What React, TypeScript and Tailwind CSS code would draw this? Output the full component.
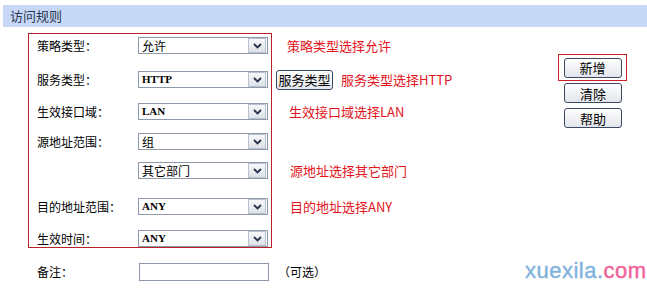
import React from "react";

const cjk = { fontFamily: '"Noto Sans CJK SC", "Noto Sans", sans-serif' };

function Arrow() {
  return (
    <div className="w-[18px] h-[15px] mr-[1px] border border-[#b9c2cd] bg-gradient-to-b from-[#f7f8fa] to-[#dde2e8] flex items-center justify-center">
      <svg width="9" height="6" viewBox="0 0 9 6">
        <path d="M1 1 L4.5 4.5 L8 1" fill="none" stroke="#26324a" strokeWidth="1.8" />
      </svg>
    </div>
  );
}

function Select({ value, latin }: { value: string; latin?: boolean }) {
  return (
    <div className="w-[130px] h-[17px] border border-[#8d99a8] bg-white flex items-center justify-between">
      <span
        className={latin ? "pl-[3px] text-[11px] font-bold text-black leading-none" : "pl-[3px] text-[12px] text-black leading-none"}
        style={latin ? { fontFamily: '"Liberation Serif", serif' } : cjk}
      >
        {value}
      </span>
      <Arrow />
    </div>
  );
}

function Btn({ label, w = 58 }: { label: string; w?: number }) {
  return (
    <div
      className={
        (w === 57 ? "w-[57px]" : "w-[58px]") +
        " h-[20px] rounded-[3px] border border-[#3a4864] bg-gradient-to-b from-[#ffffff] to-[#e2e5ea] flex items-center justify-center text-[13px] text-black leading-none"
      }
      style={cjk}
    >
      {label}
    </div>
  );
}

function Row({ label, mt, children }: { label?: string; mt: string; children: React.ReactNode }) {
  return (
    <div className={"flex items-center h-[17px] " + mt}>
      <div className="w-[109px] pl-[8px] text-[12px] text-black leading-none whitespace-nowrap" style={cjk}>
        {label}
      </div>
      {children}
    </div>
  );
}

function Note({ mt, children }: { mt: string; children: React.ReactNode }) {
  return (
    <div className={"flex items-center h-[17px] " + mt}>
      {children}
    </div>
  );
}

const red = "text-[13px] text-[#e3141b] leading-none whitespace-nowrap";

export default function App() {
  return (
    <div className="relative w-[647px] h-[291px] bg-white overflow-hidden" style={cjk}>
      <div className="mt-[5px] ml-[3px] h-[22px] bg-[#c6d8f6] flex items-center pl-[7px] text-[13px] text-[#2a3650]">
        访问规则
      </div>

      <div className="flex mt-[6px]">
        <div className="ml-[28px] w-[244px] border border-[#b8202a] flex flex-col">
          <Row label="策略类型：" mt="mt-[3px]">
            <Select value="允许" />
          </Row>
          <Row label="服务类型：" mt="mt-[17px]">
            <Select value="HTTP" latin />
          </Row>
          <Row label="生效接口域：" mt="mt-[15px]">
            <Select value="LAN" latin />
          </Row>
          <Row label="源地址范围：" mt="mt-[13px]">
            <Select value="组" />
          </Row>
          <Row mt="mt-[12px]">
            <Select value="其它部门" />
          </Row>
          <Row label="目的地址范围：" mt="mt-[19px]">
            <Select value="ANY" latin />
          </Row>
          <Row label="生效时间：" mt="mt-[15px]">
            <Select value="ANY" latin />
          </Row>
        </div>

        <div className="ml-[4px] w-[282px] flex flex-col pt-[1px]">
          <Note mt="mt-[3px]">
            <span className={"ml-[11px] " + red}>策略类型选择允许</span>
          </Note>
          <Note mt="mt-[17px]">
            <Btn label="服务类型" w={57} />
            <span className={"ml-[8px] " + red}>服务类型选择HTTP</span>
          </Note>
          <Note mt="mt-[15px]">
            <span className={"ml-[13px] " + red}>生效接口域选择LAN</span>
          </Note>
          <Note mt="mt-[13px]">
            <span />
          </Note>
          <Note mt="mt-[12px]">
            <span className={"ml-[14px] " + red}>源地址选择其它部门</span>
          </Note>
          <Note mt="mt-[19px]">
            <span className={"ml-[14px] " + red}>目的地址选择ANY</span>
          </Note>
        </div>

        <div className="flex flex-col mt-[21px]">
          <div className="w-[69px] h-[27px] border border-[#c8202a] flex items-center justify-center">
            <Btn label="新增" />
          </div>
          <div className="ml-[6px] mt-[2px]">
            <Btn label="清除" />
          </div>
          <div className="ml-[6px] mt-[5px]">
            <Btn label="帮助" />
          </div>
        </div>
      </div>

      <div className="flex items-center h-[18px] mt-[15px]">
        <div className="ml-[37px] w-[102px] text-[12px] text-black leading-none">备注：</div>
        <div className="w-[130px] h-[18px] border border-[#8d99a8] bg-white" />
        <span className="ml-[9px] text-[12px] text-black leading-none">（可选）</span>
      </div>

      <div
        className="absolute left-[525px] top-[257px] text-[22px] leading-[28px] tracking-[0.5px]"
        style={{ fontFamily: '"Liberation Sans", Arial, sans-serif', WebkitTextStroke: "0.4px currentColor" }}
      >
        <span className="text-[#7fb3dc]">xuexila.</span>
        <span className="text-[#f0629a]">com</span>
      </div>
    </div>
  );
}
